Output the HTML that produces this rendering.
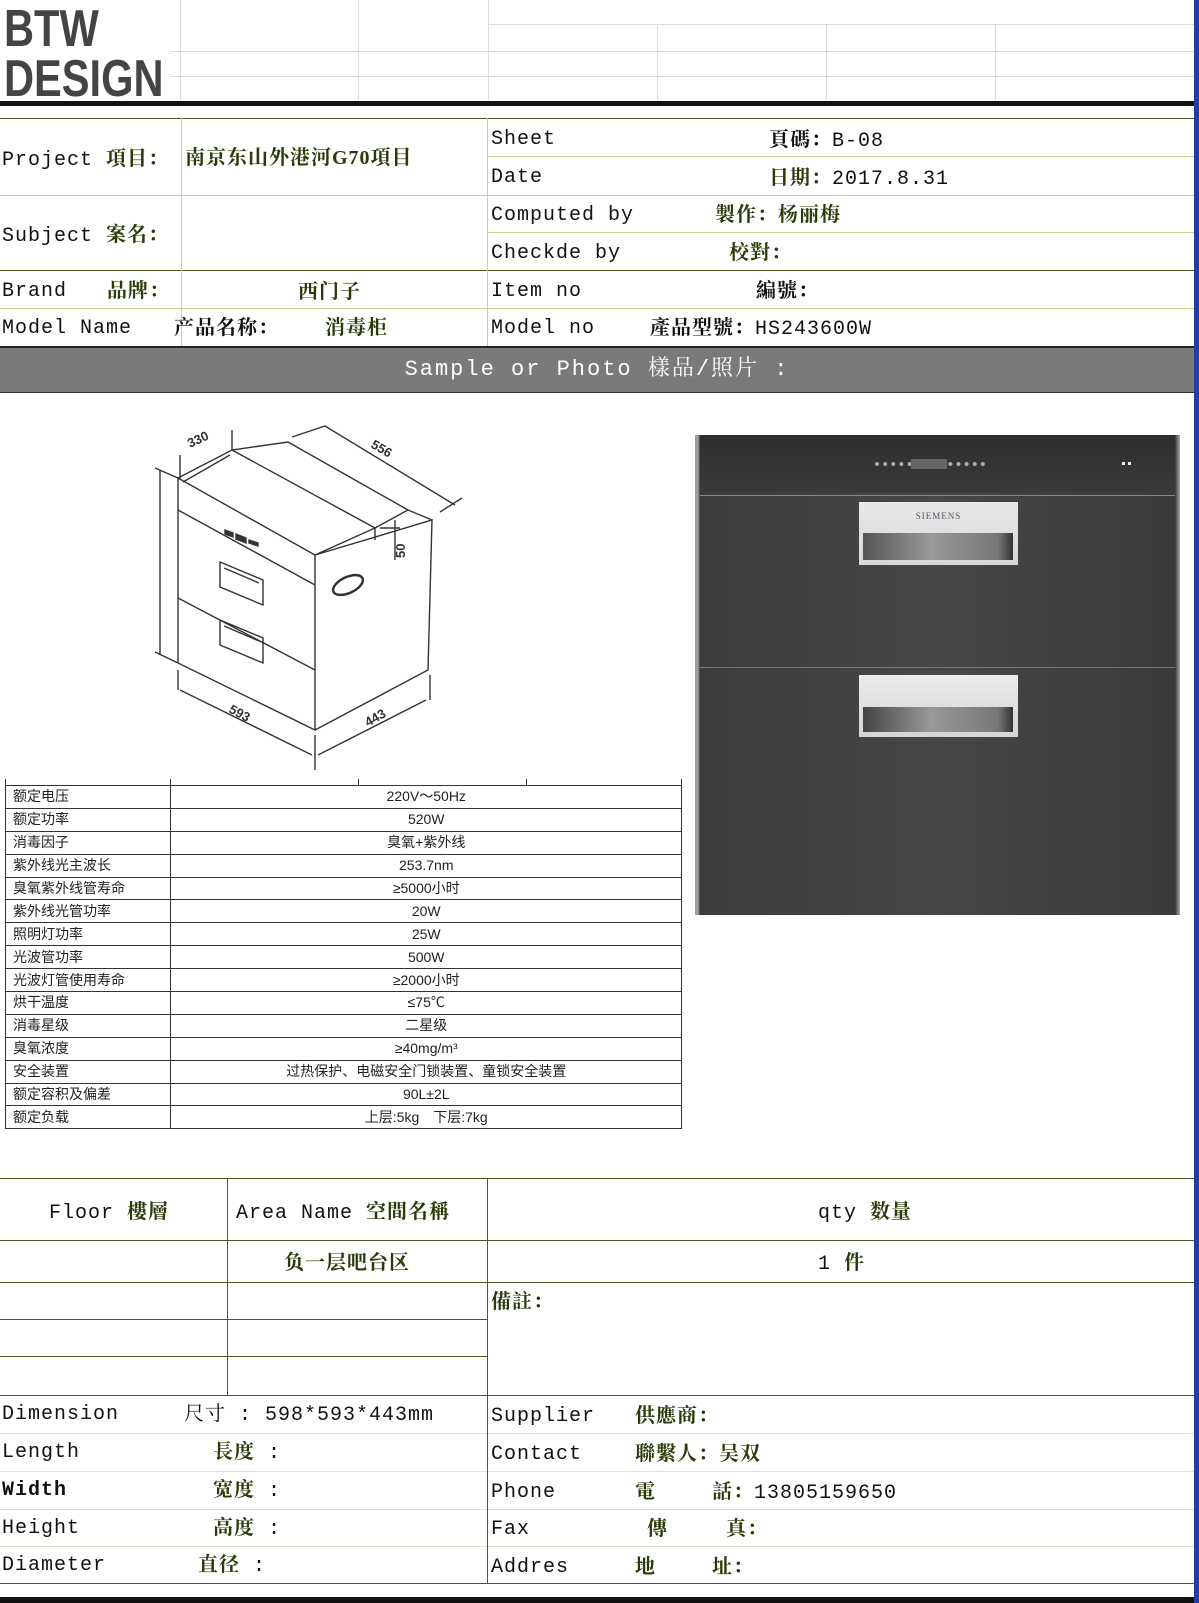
<!DOCTYPE html>
<html><head><meta charset="utf-8">
<style>
*{margin:0;padding:0;box-sizing:border-box}
body{width:1199px;height:1603px;position:relative;background:#fff;overflow:hidden;font-family:"Liberation Mono","Noto Serif CJK SC",monospace;color:#111}
.a{position:absolute;white-space:nowrap}
.h{position:absolute;height:1px;background:#4a5a20}
.v{position:absolute;width:1px;background:#4a5a20}
.g{position:absolute;background:#dcdcdc}
.t{font-size:20px;letter-spacing:1px;line-height:24px}
.c{font-family:"Liberation Serif","Noto Serif CJK SC",serif;font-weight:bold;color:#2a3a08}
.s{font-family:"Liberation Sans","Noto Sans CJK SC",sans-serif;font-size:14px;color:#222}
.logo{position:absolute;left:4px;font-family:"Liberation Sans",sans-serif;font-weight:bold;font-size:52px;line-height:52px;color:#444;transform:scaleX(0.8);transform-origin:0 0;white-space:nowrap}
td{border-top:1px solid #333;height:22.9px;padding:0;vertical-align:middle}
td:first-child{padding-left:8px;border-right:1px solid #333}
td+td{text-align:center}
</style></head><body>
<!-- header grid -->
<div class="g" style="left:180px;top:0;width:1px;height:100px"></div>
<div class="g" style="left:358px;top:0;width:1px;height:100px"></div>
<div class="g" style="left:488px;top:0;width:1px;height:100px"></div>
<div class="g" style="left:657px;top:24px;width:1px;height:76px"></div>
<div class="g" style="left:826px;top:24px;width:1px;height:76px"></div>
<div class="g" style="left:995px;top:24px;width:1px;height:76px"></div>
<div class="g" style="left:488px;top:24px;width:706px;height:1px"></div>
<div class="g" style="left:170px;top:51px;width:1024px;height:1px"></div>
<div class="g" style="left:170px;top:76px;width:1024px;height:1px"></div>
<div class="logo" style="top:3px">BTW</div>
<div class="logo" style="top:53px">DESIGN</div>
<div style="position:absolute;left:0;top:101px;width:1194px;height:5px;background:#111"></div>
<div style="position:absolute;left:1194px;top:0;width:5px;height:1603px;background:#2040a0"></div>

<!-- top info grid -->
<div class="h" style="left:0;top:118px;width:1194px"></div>
<div class="h" style="left:488px;top:156px;width:706px;background:#c8d890"></div>
<div class="h" style="left:0;top:195px;width:1194px;background:#c8d890"></div>
<div class="h" style="left:488px;top:232px;width:706px;background:#c8d890"></div>
<div class="h" style="left:0;top:270px;width:1194px"></div>
<div class="h" style="left:0;top:308px;width:1194px;background:#c8d890"></div>
<div class="v" style="left:181px;top:118px;height:228px;background:#c8d890"></div>
<div class="v" style="left:487px;top:118px;height:228px;background:#c8d890"></div>

<div class="a t" style="left:2px;top:147px">Project <span class="c">項目：</span></div>
<div class="a t c" style="left:185px;top:146px">南京东山外港河G70項目</div>
<div class="a t" style="left:2px;top:223px">Subject <span class="c">案名：</span></div>
<div class="a t" style="left:2px;top:280px">Brand</div>
<div class="a t c" style="left:107px;top:279px">品牌：</div>
<div class="a t c" style="left:298px;top:280px">西门子</div>
<div class="a t" style="left:2px;top:317px">Model Name</div>
<div class="a t c" style="left:174px;top:316px;color:#111">产品名称：</div>
<div class="a t c" style="left:325px;top:316px">消毒柜</div>

<div class="a t" style="left:491px;top:128px">Sheet</div>
<div class="a t" style="left:769px;top:128px"><span class="c" style="color:#111">頁碼：</span>B-08</div>
<div class="a t" style="left:491px;top:166px">Date</div>
<div class="a t" style="left:769px;top:166px"><span class="c">日期：</span>2017.8.31</div>
<div class="a t" style="left:491px;top:204px">Computed by</div>
<div class="a t c" style="left:715px;top:203px">製作：杨丽梅</div>
<div class="a t" style="left:491px;top:242px">Checkde by</div>
<div class="a t c" style="left:729px;top:241px">校對：</div>
<div class="a t" style="left:491px;top:280px">Item no</div>
<div class="a t c" style="left:756px;top:279px;color:#111">編號：</div>
<div class="a t" style="left:491px;top:317px">Model no</div>
<div class="a t" style="left:650px;top:316px"><span class="c" style="color:#111">產品型號：</span>HS243600W</div>

<div style="position:absolute;left:0;top:346px;width:1194px;height:47px;background:#7a7a7a;border-top:2px solid #222;border-bottom:1px solid #333"></div>
<div class="a" style="left:0;top:357px;width:1194px;text-align:center;color:#fff;font-size:22px;letter-spacing:2px;line-height:26px">Sample or Photo 樣品/照片 :</div>

<!-- drawing -->
<svg class="a" style="left:150px;top:420px" width="320" height="350" viewBox="150 420 320 350" fill="none" stroke="#333" stroke-width="1.4">
<path d="M178 478 L315 555 L315 730 L178 663 Z"/>
<path d="M315 555 L432 520 L428 670 L315 730"/>
<path d="M178 478 L232 450 L288 442 L408 510 L375 528 L375 540"/>
<path d="M232 450 L375 528 L315 555"/>
<path d="M408 510 L432 520"/>
<path d="M178 510 L315 585"/>
<path d="M178 598 L315 670"/>
<path d="M220 562 L263 580 L263 605 L220 587 Z M224 568 L259 583"/>
<path d="M220 620 L263 638 L263 663 L220 645 Z M224 626 L259 641"/>
<path d="M225 530 l8 3 l0 4 l-8 -3 Z M236 534 l10 4 l0 5 l-10 -4 Z M249 540 l9 3 l0 3 l-9 -3 Z" fill="#333"/>
<ellipse cx="348" cy="585" rx="16" ry="8" transform="rotate(-25 348 585)" stroke-width="2.5"/>
<path d="M160 470 L160 655 M155 468 L178 478 M155 652 L178 663"/>
<path d="M183 482 L230 455 M180 480 L180 455 M232 450 L232 430"/>
<path d="M292 437 L325 426 L455 505 M440 512 L462 498"/>
<path d="M395 520 L395 560 M380 528 L400 528"/>
<path d="M178 670 L178 690 M180 690 L312 755 M315 735 L315 770 M318 755 L426 700 M430 675 L430 700"/>
<text x="190" y="448" fill="#333" stroke="none" font-family="Liberation Sans" font-size="13" font-weight="bold" transform="rotate(-25 190 448)">330</text>
<text x="370" y="447" fill="#333" stroke="none" font-family="Liberation Sans" font-size="13" font-weight="bold" transform="rotate(30 370 447)">556</text>
<text x="158" y="578" fill="#333" stroke="none" font-family="Liberation Sans" font-size="13" font-weight="bold" transform="rotate(90 158 560)">598</text>
<text x="405" y="558" fill="#333" stroke="none" font-family="Liberation Sans" font-size="13" font-weight="bold" transform="rotate(-90 405 558)">50</text>
<text x="228" y="712" fill="#333" stroke="none" font-family="Liberation Sans" font-size="13" font-weight="bold" transform="rotate(28 228 712)">593</text>
<text x="368" y="727" fill="#333" stroke="none" font-family="Liberation Sans" font-size="13" font-weight="bold" transform="rotate(-30 368 727)">443</text>
</svg>

<!-- spec table -->
<div style="position:absolute;left:5px;top:779px;width:677px;height:350px;border-left:1px solid #333;border-right:1px solid #333;border-bottom:1px solid #333">
<div style="position:absolute;left:164px;top:0;width:1px;height:350px;background:#333"></div>
<div style="position:absolute;left:352px;top:0;width:1px;height:6px;background:#333"></div>
<div style="position:absolute;left:520px;top:0;width:1px;height:6px;background:#333"></div>
</div>
<div class="a s" style="left:5px;top:785px;width:677px">
<table style="border-collapse:collapse;width:677px;font-size:14px;line-height:21px">
<colgroup><col style="width:165px"><col></colgroup>
<tbody style="color:#222">
<tr><td>额定电压</td><td>220V～50Hz</td></tr>
<tr><td>额定功率</td><td>520W</td></tr>
<tr><td>消毒因子</td><td>臭氧+紫外线</td></tr>
<tr><td>紫外线光主波长</td><td>253.7nm</td></tr>
<tr><td>臭氧紫外线管寿命</td><td>≥5000小时</td></tr>
<tr><td>紫外线光管功率</td><td>20W</td></tr>
<tr><td>照明灯功率</td><td>25W</td></tr>
<tr><td>光波管功率</td><td>500W</td></tr>
<tr><td>光波灯管使用寿命</td><td>≥2000小时</td></tr>
<tr><td>烘干温度</td><td>≤75℃</td></tr>
<tr><td>消毒星级</td><td>二星级</td></tr>
<tr><td>臭氧浓度</td><td>≥40mg/m³</td></tr>
<tr><td>安全装置</td><td>过热保护、电磁安全门锁装置、童锁安全装置</td></tr>
<tr><td>额定容积及偏差</td><td>90L±2L</td></tr>
<tr><td>额定负载</td><td>上层:5kg　下层:7kg</td></tr>
</tbody></table></div>

<!-- photo -->
<div style="position:absolute;left:695px;top:435px;width:485px;height:480px;background:linear-gradient(90deg,#9aa0a2 0,#9aa0a2 3px,#3c3c3c 5px,#474747 50%,#3a3a3a 99%,#aab 100%)">
<div style="position:absolute;left:5px;top:0;width:475px;height:58px;background:linear-gradient(#2e2e2e,#3a3a3a)"></div>
<div style="position:absolute;left:5px;top:60px;width:475px;height:1px;background:#888"></div>
<div style="position:absolute;left:5px;top:232px;width:475px;height:1px;background:#777"></div>
<div style="position:absolute;left:180px;top:27px;width:110px;height:4px;border-top:4px dotted #aaa"></div>
<div style="position:absolute;left:216px;top:24px;width:36px;height:10px;background:#666"></div>
<div style="position:absolute;left:427px;top:27px;width:9px;height:3px;border-left:3px solid #eee;border-right:3px solid #eee"></div>
<div style="position:absolute;left:164px;top:67px;width:159px;height:63px;background:linear-gradient(#e8e8e8,#d8d8d8)">
<div style="position:absolute;left:0;top:9px;width:159px;text-align:center;font-family:'Liberation Serif',serif;font-size:9px;letter-spacing:1px;color:#556">SIEMENS</div>
<div style="position:absolute;left:4px;top:31px;width:150px;height:27px;background:linear-gradient(90deg,#555,#999 45%,#777 90%,#333)"></div></div>
<div style="position:absolute;left:164px;top:240px;width:159px;height:62px;background:linear-gradient(#ececec,#d5d5d5)">
<div style="position:absolute;left:4px;top:32px;width:150px;height:25px;background:linear-gradient(90deg,#444,#999 45%,#777 90%,#333)"></div></div>
</div>

<!-- bottom table -->
<div class="h" style="left:0;top:1178px;width:1194px"></div>
<div class="h" style="left:0;top:1240px;width:1194px"></div>
<div class="h" style="left:0;top:1282px;width:1194px"></div>
<div class="h" style="left:0;top:1319px;width:487px"></div>
<div class="h" style="left:0;top:1356px;width:487px"></div>
<div class="h" style="left:0;top:1395px;width:1194px"></div>
<div class="h" style="left:0;top:1433px;width:1194px;background:#dde4cc"></div>
<div class="h" style="left:0;top:1471px;width:1194px;background:#dde4cc"></div>
<div class="h" style="left:0;top:1509px;width:1194px;background:#dde4cc"></div>
<div class="h" style="left:0;top:1546px;width:1194px;background:#dde4cc"></div>
<div class="h" style="left:0;top:1583px;width:1194px"></div>
<div class="v" style="left:227px;top:1178px;height:217px"></div>
<div class="v" style="left:487px;top:1178px;height:405px"></div>
<div style="position:absolute;left:0;top:1597px;width:1194px;height:6px;background:#111"></div>

<div class="a t" style="left:49px;top:1200px">Floor <span class="c">樓層</span></div>
<div class="a t" style="left:236px;top:1200px">Area Name <span class="c">空間名稱</span></div>
<div class="a t" style="left:818px;top:1200px">qty <span class="c">数量</span></div>
<div class="a t c" style="left:284px;top:1251px">负一层吧台区</div>
<div class="a t" style="left:818px;top:1251px">1 <span class="c">件</span></div>
<div class="a t c" style="left:491px;top:1290px">備註：</div>

<div class="a t" style="left:2px;top:1403px">Dimension</div>
<div class="a t" style="left:184px;top:1402px"><span class="c" style="font-weight:normal;color:#111">尺寸</span> : 598*593*443mm</div>
<div class="a t" style="left:2px;top:1441px">Length</div>
<div class="a t" style="left:213px;top:1440px"><span class="c">長度</span> :</div>
<div class="a t" style="left:2px;top:1479px;font-weight:bold">Width</div>
<div class="a t" style="left:213px;top:1478px"><span class="c">宽度</span> :</div>
<div class="a t" style="left:2px;top:1517px">Height</div>
<div class="a t" style="left:213px;top:1516px"><span class="c">高度</span> :</div>
<div class="a t" style="left:2px;top:1554px">Diameter</div>
<div class="a t" style="left:198px;top:1553px"><span class="c">直径</span> :</div>

<div class="a t" style="left:491px;top:1405px">Supplier</div>
<div class="a t c" style="left:635px;top:1404px">供應商：</div>
<div class="a t" style="left:491px;top:1443px">Contact</div>
<div class="a t c" style="left:635px;top:1442px">聯繫人：吴双</div>
<div class="a t" style="left:491px;top:1481px">Phone</div>
<div class="a t c" style="left:635px;top:1480px">電</div>
<div class="a t" style="left:712px;top:1480px"><span class="c">話：</span>13805159650</div>
<div class="a t" style="left:491px;top:1518px">Fax</div>
<div class="a t c" style="left:647px;top:1517px">傳</div>
<div class="a t c" style="left:726px;top:1517px">真：</div>
<div class="a t" style="left:491px;top:1556px">Addres</div>
<div class="a t c" style="left:635px;top:1555px">地</div>
<div class="a t c" style="left:712px;top:1555px">址：</div>
</body></html>
